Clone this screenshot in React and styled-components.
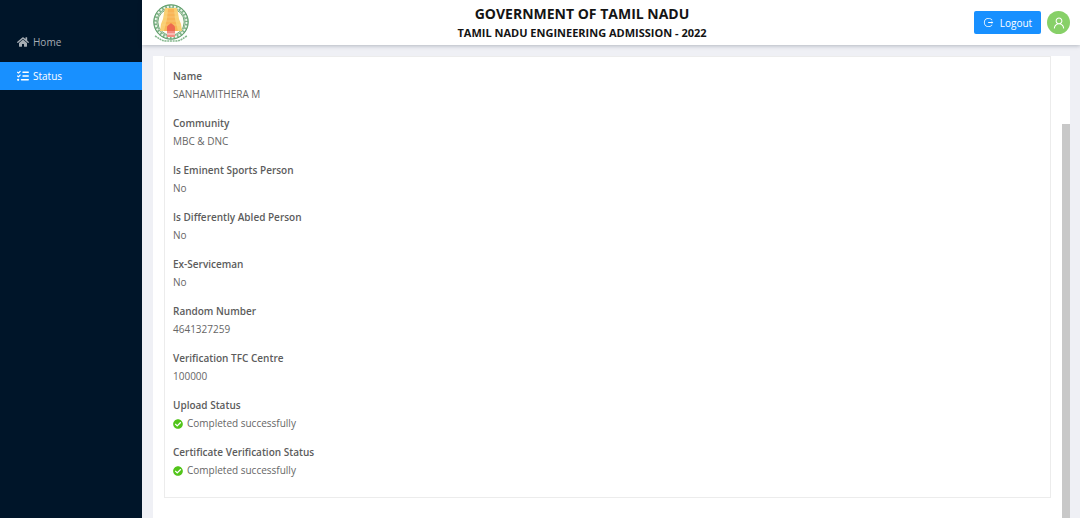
import React from 'react';
import styled, { createGlobalStyle } from 'styled-components';
import { FaHome, FaCheckCircle } from 'react-icons/fa';
import { FaListCheck } from 'react-icons/fa6';
import { AiOutlineLogout, AiOutlineUser } from 'react-icons/ai';

const GlobalStyle = createGlobalStyle`
  * { box-sizing: border-box; }
  body {
    margin: 0;
    background: #eff0f5;
    font-family: "Segoe UI", "Open Sans", "Noto Sans", sans-serif;
    font-size: 10px;
    color: #595959;
  }
`;

const Page = styled.div`
  display: flex;
  height: 100vh;
  overflow: hidden;
`;

const Sidebar = styled.nav`
  flex: 0 0 142px;
  display: flex;
  flex-direction: column;
  gap: 6px;
  padding-top: 28px;
  background: #001529;
`;

const NavLink = styled.a`
  display: flex;
  align-items: center;
  gap: 4px;
  height: 28px;
  padding-left: 17px;
  color: ${(p) => (p.$active ? '#ffffff' : '#a6adb4')};
  background: ${(p) => (p.$active ? '#1890ff' : 'transparent')};
  text-decoration: none;
  svg { width: 12px; height: 12px; }
`;

const Main = styled.div`
  flex: 1;
  min-width: 0;
  display: flex;
  flex-direction: column;
`;

const Header = styled.header`
  display: flex;
  align-items: center;
  height: 45px;
  padding: 0 10px;
  background: #ffffff;
  box-shadow: 0 1px 4px rgba(0, 21, 41, 0.25);
`;

const Titles = styled.div`
  flex: 1;
  text-align: center;
  color: #141414;
`;

const Title = styled.h1`
  margin: 0;
  font-size: 14px;
  line-height: 20px;
  font-weight: 700;
`;

const Subtitle = styled.h2`
  margin: 0;
  font-size: 11px;
  line-height: 18px;
  font-weight: 700;
`;

const Actions = styled.div`
  display: flex;
  justify-content: flex-end;
  align-items: center;
  gap: 6px;
`;

const LogoutButton = styled.button`
  display: flex;
  align-items: center;
  justify-content: center;
  gap: 6px;
  width: 67px;
  height: 23px;
  padding: 0;
  border: 0;
  border-radius: 2px;
  background: #1890ff;
  color: #ffffff;
  font: inherit;
`;

const Avatar = styled.button`
  display: grid;
  place-items: center;
  width: 23px;
  height: 23px;
  padding: 0;
  border: 0;
  border-radius: 50%;
  background: #87d068;
  color: #ffffff;
`;

const Panel = styled.main`
  flex: 1;
  min-height: 0;
  display: flex;
  align-items: stretch;
  gap: 11px;
  margin: 11px 10px 0 11px;
  padding-left: 11px;
  background: #ffffff;
`;

const Card = styled.dl`
  flex: 1;
  align-self: flex-start;
  display: flex;
  flex-direction: column;
  gap: 12px;
  margin: 0;
  padding: 11px 8px 18px;
  border: 1px solid #ececec;
`;

const Field = styled.div`
  line-height: 17px;
`;

const Label = styled.dt`
  height: 18px;
  color: #5c5c5c;
  font-weight: 600;
`;

const Value = styled.dd`
  display: flex;
  align-items: center;
  gap: 4px;
  height: 17px;
  margin: 0;
  color: #666666;
  svg { color: #52c41a; }
`;

const ScrollTrack = styled.div`
  flex: 0 0 8px;
  display: flex;
  padding-top: 68px;
`;

const ScrollThumb = styled.div`
  flex: 1;
  background: #c8c8c8;
`;

const fields = [
  { label: 'Name', value: 'SANHAMITHERA M' },
  { label: 'Community', value: 'MBC & DNC' },
  { label: 'Is Eminent Sports Person', value: 'No' },
  { label: 'Is Differently Abled Person', value: 'No' },
  { label: 'Ex-Serviceman', value: 'No' },
  { label: 'Random Number', value: '4641327259' },
  { label: 'Verification TFC Centre', value: '100000' },
  { label: 'Upload Status', value: 'Completed successfully', done: true },
  { label: 'Certificate Verification Status', value: 'Completed successfully', done: true },
];

function Emblem() {
  return (
    <svg width="38" height="40" viewBox="-1 0 38 40" role="img" aria-label="Tamil Nadu emblem">
      <circle cx="18" cy="19" r="15.5" fill="#fffdf5" stroke="#7fb388" strokeWidth="3.6" />
      <circle cx="18" cy="19" r="15.5" fill="none" stroke="#eef6ec" strokeWidth="2" strokeDasharray="2 1.6" />
      <circle cx="18" cy="19" r="17.3" fill="none" stroke="#4b9159" strokeWidth="0.8" />
      <circle cx="18" cy="19" r="13.2" fill="none" stroke="#4b9159" strokeWidth="0.8" />
      <path d="M12 5h12l1 5 1 6 2 5 1 7H7l1-7 2-5 1-6z" fill="#f9cf72" />
      <path d="M15 6h6l1 10 3 12H11l3-12z" fill="#f8b456" />
      <path d="M12 10h12M11 14h14M10 18h16M9 22h18" stroke="#fbdc98" strokeWidth="0.4" />
      <path d="M14 25c0-3 2-3 4-5 2 2 4 2 4 5v3h-8z" fill="#ee6a50" />
      <path d="M14 28h8v6h-8z" fill="#f48c82" />
      <path d="M14 31h8" stroke="#fff" strokeWidth="0.8" />
      <path d="M2 33c4 2 6 5 11 5h10c5 0 7-3 11-5" fill="none" stroke="#86b88e" strokeWidth="1.6" strokeDasharray="2 0.7" />
    </svg>
  );
}

export default function App() {
  return (
    <>
      <GlobalStyle />
      <Page>
        <Sidebar>
          <NavLink href="#home"><FaHome />Home</NavLink>
          <NavLink href="#status" $active aria-current="page"><FaListCheck />Status</NavLink>
        </Sidebar>
        <Main>
          <Header>
            <Emblem />
            <Titles>
              <Title>GOVERNMENT OF TAMIL NADU</Title>
              <Subtitle>TAMIL NADU ENGINEERING ADMISSION - 2022</Subtitle>
            </Titles>
            <Actions>
              <LogoutButton type="button"><AiOutlineLogout size={11} />Logout</LogoutButton>
              <Avatar type="button" aria-label="Account"><AiOutlineUser size={14} /></Avatar>
            </Actions>
          </Header>
          <Panel>
            <Card>
              {fields.map((f) => (
                <Field key={f.label}>
                  <Label>{f.label}</Label>
                  <Value>{f.done && <FaCheckCircle size={10} />}{f.value}</Value>
                </Field>
              ))}
            </Card>
            <ScrollTrack>
              <ScrollThumb />
            </ScrollTrack>
          </Panel>
        </Main>
      </Page>
    </>
  );
}
